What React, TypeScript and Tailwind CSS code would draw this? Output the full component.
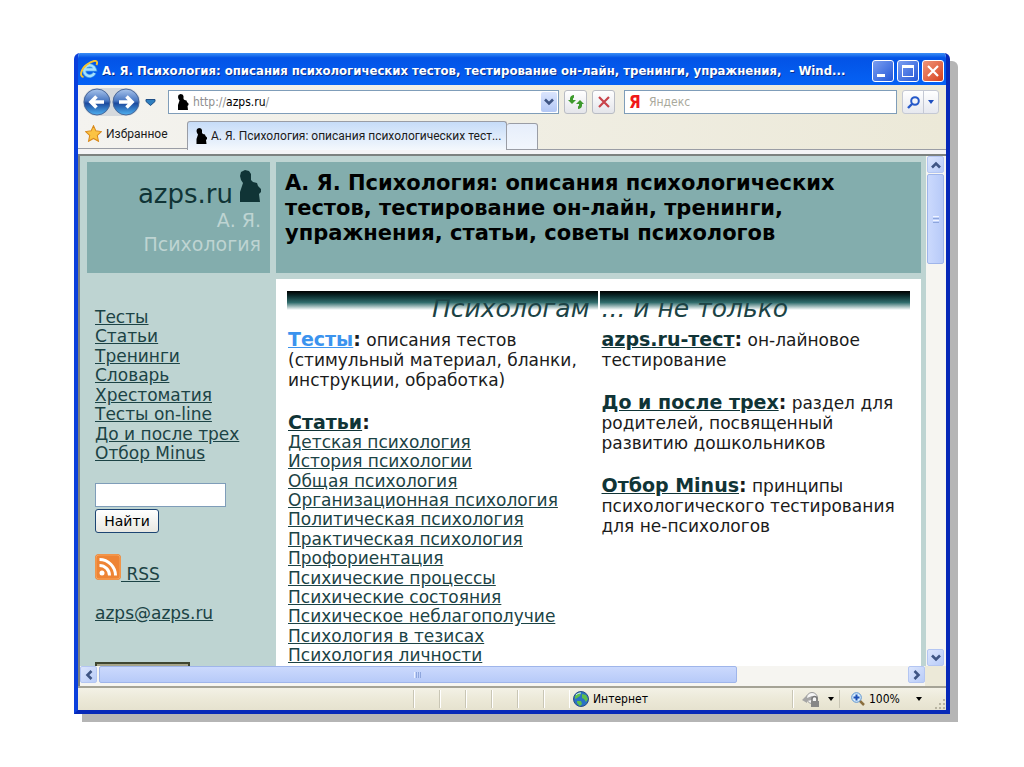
import React, { useState } from 'react';

// --- Data ---
const menuLinks = [
  'Тесты',
  'Статьи',
  'Тренинги',
  'Словарь',
  'Хрестоматия',
  'Тесты on-line',
  'До и после трех',
  'Отбор Minus',
];

const articleLinks = [
  'Детская психология',
  'История психологии',
  'Общая психология',
  'Организационная психология',
  'Политическая психология',
  'Практическая психология',
  'Профориентация',
  'Психические процессы',
  'Психические состояния',
  'Психическое неблагополучие',
  'Психология в тезисах',
  'Психология личности',
];

// --- Icons ---
function Figure({ className }: { className: string }) {
  return (
    <svg viewBox="0 0 22 32" className={className} fill="currentColor" aria-hidden="true">
      <path d="M2 2 4 1l2-1 4 1 2 3v6l2 2 4 1 1 3 3 3v3l-2 2 1 8H1V22l2-6 1-3-2-3L1 6z" />
    </svg>
  );
}

function ExplorerIcon() {
  return (
    <svg viewBox="0 0 18 18" className="size-[18px] shrink-0" fill="none" aria-hidden="true">
      <path d="M14.500 13a5.400 5.400 0 1 1 .4-3.500H5" stroke="#3f9ae6" strokeWidth="4" />
      <path d="M14.500 13a5.400 5.400 0 1 1 .4-3.500H5" stroke="#a5e0ff" strokeWidth="2.400" />
      <path d="M3.500 17C-1 16.500 1 9 7 4.500S16.500.5 17 2c.3 1 0 2-.6 3" stroke="#f7c52f" strokeWidth="1.900" />
    </svg>
  );
}

function NavArrow({ flip }: { flip?: boolean }) {
  return (
    <svg viewBox="0 0 28 28" className={flip ? 'size-7 rotate-180' : 'size-7'} aria-hidden="true">
      <defs>
        <linearGradient id={flip ? 'orbForward' : 'orbBack'} x1="0" y1={flip ? '1' : '0'} x2="0" y2={flip ? '0' : '1'}>
          <stop offset="0" stopColor="#a9c5ec" />
          <stop offset="0.450" stopColor="#4a78c2" />
          <stop offset="0.550" stopColor="#1c4a9e" />
          <stop offset="1" stopColor="#4fb2f2" />
        </linearGradient>
      </defs>
      <circle cx="14" cy="14" r="13" fill={flip ? 'url(#orbForward)' : 'url(#orbBack)'} stroke="#4a6797" />
      <path d="M13.500 8.500 8 14l5.500 5.500M9 14H21" fill="none" stroke="#fff" strokeWidth="3.600" />
    </svg>
  );
}

function Chevron({ className }: { className: string }) {
  return (
    <svg viewBox="0 0 10 8" className={className} fill="none" aria-hidden="true">
      <path d="M1 1.500 5 5.500 9 1.500" stroke="#3f5584" strokeWidth="2.600" />
    </svg>
  );
}

function Triangle({ className }: { className: string }) {
  return (
    <svg viewBox="0 0 6 4" className={className} fill="currentColor" aria-hidden="true">
      <path d="M0 0h6L3 4z" />
    </svg>
  );
}

// --- Window chrome ---
function TitleBar() {
  return (
    <header className="flex h-8 shrink-0 items-center bg-linear-to-b from-[#3a8ef5] via-[#0353e6] via-15% to-[#0562f5] pl-0.5 pr-0.5">
      <ExplorerIcon />
      <h1 className="ml-1 min-w-0 flex-1 overflow-hidden whitespace-nowrap pt-1 font-['DejaVu_Sans_Condensed','DejaVu_Sans',sans-serif] text-[13px] font-bold text-white [text-shadow:1px_1px_0_#0a2f8c]">
        А. Я. Психология: описания психологических тестов, тестирование он-лайн, тренинги, упражнения,&nbsp; - Wind...
      </h1>
      <div className="flex gap-[3px] pt-1">
        <button aria-label="Свернуть" className="flex size-[22px] items-end rounded-[3px] border border-white bg-linear-to-br from-[#7b9df0] to-[#2456d6] p-1">
          <span className="h-[3px] w-2 bg-white" />
        </button>
        <button aria-label="Развернуть" className="flex size-[22px] items-center justify-center rounded-[3px] border border-white bg-linear-to-br from-[#7b9df0] to-[#2456d6]">
          <span className="size-3 border border-t-[3px] border-white" />
        </button>
        <button aria-label="Закрыть" className="flex size-[22px] items-center justify-center rounded-[3px] border border-white bg-linear-to-br from-[#ee9479] to-[#d63d14]">
          <svg viewBox="0 0 12 12" className="size-3" aria-hidden="true">
            <path d="M1 1l10 10M11 1L1 11" stroke="#fff" strokeWidth="2.200" />
          </svg>
        </button>
      </div>
    </header>
  );
}

function AddressRow() {
  const [query, setQuery] = useState('');
  return (
    <div className="flex h-[34px] items-center pl-[5px] pr-[7px]">
      <div className="flex gap-px rounded-full bg-[#d5d9dd]">
        <button aria-label="Назад"><NavArrow /></button>
        <button aria-label="Вперед"><NavArrow flip /></button>
      </div>
      <button aria-label="Журнал" className="ml-[5px] w-[11px]">
        <svg viewBox="0 0 11 7" className="w-[11px]" aria-hidden="true">
          <path d="M1 .500h9v2L5.500 6.500 1 2.500z" fill="#2e7fc0" stroke="#1f4f86" />
        </svg>
      </button>
      <div className="ml-3 flex h-6 min-w-0 flex-1 items-center border border-[#7f9db9] bg-white pl-2 pr-px">
        <Figure className="h-4 w-3 shrink-0 text-black" />
        <div className="ml-1 flex-1 text-[12px] text-black">
          <span className="text-[#8f8f8f]">http://</span>azps.ru<span className="text-[#8f8f8f]">/</span>
        </div>
        <button aria-label="Список адресов" className="flex h-5 w-4 items-center justify-center rounded-xs bg-linear-to-b from-[#dbe5fd] to-[#b3c7f5]">
          <Chevron className="w-[10px]" />
        </button>
      </div>
      <button aria-label="Обновить" className="ml-[5px] flex h-6 w-[23px] items-center justify-center rounded-[3px] border border-[#b9bcc4] bg-linear-to-b from-white to-[#e4e5ea]">
        <svg viewBox="0 0 16 14" className="w-4" fill="#3d9a2c" aria-hidden="true">
          <path d="M6 0v2.500L5 3.500v1.500h3L4 9 0 5h2V3.500C2 1.500 4 0 6 0zM10 14v-2.500l1-1V9H8l4-4 4 4h-2v1.500c0 2-2 3.500-4 3.500z" />
        </svg>
      </button>
      <button aria-label="Остановить" className="ml-[5px] flex h-6 w-[23px] items-center justify-center rounded-[3px] border border-[#b9bcc4] bg-linear-to-b from-white to-[#e4e5ea]">
        <svg viewBox="0 0 12 12" className="w-3" aria-hidden="true">
          <path d="M1 1l10 10M11 1L1 11" stroke="#c8434a" strokeWidth="2.200" />
        </svg>
      </button>
      <div className="ml-[9px] flex h-6 w-[273px] items-center border border-[#7f9db9] bg-white pl-1">
        <span className="w-3 text-[17px] font-bold leading-5 text-[#f01818]">Я</span>
        <input
          aria-label="Поиск"
          placeholder="Яндекс"
          value={query}
          onChange={(e) => setQuery(e.target.value)}
          className="ml-2 min-w-0 flex-1 text-[12px] outline-none placeholder:text-[#a9a99c]"
        />
      </div>
      <div className="ml-[5px] flex h-6 rounded-[3px] border border-[#c5c9d4] bg-linear-to-b from-white to-[#e6e8ef]">
        <button aria-label="Найти в Яндексе" className="flex w-[21px] items-center justify-center border-r border-[#c5c9d4]">
          <svg viewBox="0 0 13 13" className="w-[13px]" fill="none" stroke="#2659c9" strokeWidth="2" aria-hidden="true">
            <circle cx="8" cy="5" r="3.800" />
            <path d="M5 8l-4 4" strokeWidth="2.400" />
          </svg>
        </button>
        <button aria-label="Параметры поиска" className="flex w-[14px] items-center justify-center text-[#1f4fc0]">
          <Triangle className="w-1.5" />
        </button>
      </div>
    </div>
  );
}

function TabRow() {
  return (
    <div className="flex h-[31px] items-end font-[Roboto,sans-serif]">
      <div className="flex h-[30px] w-[109px] items-center self-start border-b border-[#9a9da5] pl-[7px]">
        <button className="flex items-center gap-1 text-[12px] text-[#1b1b1b]">
          <svg viewBox="0 0 24 24" className="size-[17px]" aria-hidden="true">
            <path d="M12 1l3.400 7.300 7.600 1-5.600 5.500L19 23l-7-4-7 4 1.600-8.200L1 9.300l7.600-1z" fill="#fbc343" stroke="#d98a1c" strokeWidth="1.500" />
          </svg>
          Избранное
        </button>
      </div>
      <button className="flex h-[29px] w-[320px] min-w-0 items-center overflow-hidden whitespace-nowrap rounded-t-[3px] border border-b-0 border-[#9a9da5] bg-linear-to-b from-[#c6dcf8] to-[#f4f8fd] pl-2 text-[12px] text-[#1b1b1b]">
        <Figure className="h-4 w-[11px] shrink-0 text-black" />
        <span className="ml-1">А. Я. Психология: описания психологических тест...</span>
      </button>
      <button aria-label="Новая вкладка" className="h-[27px] w-[31px] self-end rounded-t-[3px] border border-l-0 border-[#9a9da5] bg-linear-to-b from-[#e6eefb] to-[#f2f6fc]" />
      <div className="flex-1 self-stretch border-b border-[#9a9da5]" />
    </div>
  );
}

const scrollButton =
  'flex size-[17px] shrink-0 items-center justify-center rounded-xs border border-[#b4c6f2] bg-linear-to-br from-[#dbe5fd] to-[#b9ccf8]';

function VerticalScrollbar() {
  return (
    <div className="flex w-5 shrink-0 flex-col bg-[#f6f5f1] px-px">
      <button aria-label="Вверх" className={scrollButton}>
        <Chevron className="w-[10px] rotate-180" />
      </button>
      <div className="flex-1 py-px">
        <div className="flex h-[19%] w-[17px] flex-col items-center justify-center gap-px rounded-xs border border-[#9fb5ea] bg-linear-to-r from-[#cbd9fd] to-[#b7caf8]">
          <span className="h-px w-1.5 bg-[#eef3ff]" />
          <span className="h-px w-1.5 bg-[#8ea6dd]" />
          <span className="h-px w-1.5 bg-[#eef3ff]" />
          <span className="h-px w-1.5 bg-[#8ea6dd]" />
        </div>
      </div>
      <button aria-label="Вниз" className={scrollButton}>
        <Chevron className="w-[10px]" />
      </button>
    </div>
  );
}

function HorizontalScrollbar() {
  return (
    <div className="flex h-5 shrink-0 items-start bg-[#f6f5f1]">
      <button aria-label="Влево" className={scrollButton}>
        <Chevron className="w-[10px] rotate-90" />
      </button>
      <div className="flex-1 px-0.5">
        <div className="flex h-[17px] w-[79%] items-center justify-center gap-px rounded-xs border border-[#9fb5ea] bg-linear-to-b from-[#cbd9fd] to-[#b7caf8]">
          <span className="h-1.5 w-px bg-[#eef3ff]" />
          <span className="h-1.5 w-px bg-[#8ea6dd]" />
          <span className="h-1.5 w-px bg-[#8ea6dd]" />
          <span className="h-1.5 w-px bg-[#8ea6dd]" />
        </div>
      </div>
      <button aria-label="Вправо" className={scrollButton}>
        <Chevron className="w-[10px] -rotate-90" />
      </button>
      <div className="w-[21px] self-stretch bg-[#ece9d8]" />
    </div>
  );
}

function StatusBar() {
  return (
    <footer className="flex h-6 shrink-0 items-center border-t-2 border-[#a5a396] bg-linear-to-b from-[#f3f1e6] via-[#ece9d8] to-[#e6e2cf] text-[12px] text-black">
      <div className="flex-1" />
      {[0, 1, 2, 3, 4, 5].map((n) => (
        <div key={n} className="h-[18px] w-[26px] border-l border-[#c9c6b5] shadow-[inset_1px_0_0_#fff]" />
      ))}
      <div className="flex h-[18px] w-[223px] items-center gap-1 border-l border-white pl-[3px]">
        <svg viewBox="0 0 16 16" className="size-4" aria-hidden="true">
          <circle cx="8" cy="8" r="7.500" fill="#2b72c4" stroke="#2a4f86" />
          <path d="M2 5c2-3 5-4 6-3l-1 3-3 2-2 1zM9 3l4 1 2 4-2 3-2-3-2-1zM4 10l4 0 1 3-2 2-3-3z" fill="#5fc04a" />
          <path d="M3 4c2-2 4-2 5-2" stroke="#cfe9ff" fill="none" />
        </svg>
        <span>Интернет</span>
      </div>
      <button aria-label="Защищенный режим" className="flex h-[18px] w-[47px] items-center gap-2 border-l border-[#c9c6b5] pl-[9px] shadow-[inset_1px_0_0_#fff]">
        <svg viewBox="0 0 18 16" className="w-[18px]" aria-hidden="true">
          <circle cx="10" cy="7" r="5.500" fill="#f5f5f5" stroke="#9b9b9b" />
          <path d="M0 9l5-5v3l5-2v4l-5 1v2z" fill="#a5a5a5" />
          <path d="M10 10V8a2 2 0 0 1 5 0v2" stroke="#777" strokeWidth="1.500" fill="none" />
          <path d="M9 10h8v6H9z" fill="#878787" />
        </svg>
        <Triangle className="w-1.5" />
      </button>
      <button className="flex h-[18px] w-[95px] items-center gap-1 border-l border-[#c9c6b5] pl-[11px]">
        <svg viewBox="0 0 14 14" className="w-[14px] shrink-0" fill="none" aria-hidden="true">
          <path d="M8 8l5 5" stroke="#8a6f3f" strokeWidth="2.500" />
          <circle cx="5.500" cy="5.500" r="4.800" fill="#d7ecfd" stroke="#5a92cf" />
          <path d="M5.500 2.500v6M2.500 5.500h6" stroke="#1c4fb5" strokeWidth="2" />
        </svg>
        <span>100%</span>
        <Triangle className="ml-3 w-1.5" />
      </button>
      <svg viewBox="0 0 12 12" className="size-3 shrink-0 self-end" fill="#b8b4a2" aria-hidden="true">
        <path d="M9 1h2v2H9zM5 5h2v2H5zM9 5h2v2H9zM1 9h2v2H1zM5 9h2v2H5zM9 9h2v2H9z" />
      </svg>
    </footer>
  );
}

// --- Web page ---
function Sidebar() {
  const [search, setSearch] = useState('');
  return (
    <aside className="w-[183px] shrink-0">
      <div className="h-[111px] bg-[#83adad] pr-[9px] pt-2 text-right">
        <div className="flex items-end justify-end gap-1.5 text-[#103436]">
          <span className="text-[26px] leading-8">azps.ru</span>
          <Figure className="mb-2 h-8 w-[22px]" />
        </div>
        <div className="-mt-0.5 text-[19px] leading-6 text-[#bed4d2]">
          А. Я.
          <br />
          Психология
        </div>
      </div>
      <div className="pl-2 pt-[35px] text-[17px] text-[#1c4345]">
        <nav className="flex h-[155px] flex-col items-start justify-between">
          {menuLinks.map((label) => (
            <a key={label} href="#" className="leading-[19px] underline">
              {label}
            </a>
          ))}
        </nav>
        <form className="mt-5" onSubmit={(e) => e.preventDefault()}>
          <input
            aria-label="Поиск по сайту"
            value={search}
            onChange={(e) => setSearch(e.target.value)}
            className="block h-6 w-[131px] border border-[#7f9db9] bg-white px-1 text-[14px] outline-none"
          />
          <button className="mt-0.5 block h-6 w-16 rounded-[3px] border border-[#1d4573] bg-linear-to-b from-white to-[#e9e8e2] text-[14px] leading-5 text-black">
            Найти
          </button>
        </form>
        <a href="#" className="mt-[21px] flex items-end">
          <svg viewBox="0 0 26 26" className="size-[26px]" fill="none" aria-hidden="true">
            <rect width="26" height="26" rx="4" fill="#ee8435" />
            <rect x="1" y="1" width="24" height="24" rx="3" stroke="#f6a45c" />
            <circle cx="7" cy="19" r="2.500" fill="#fff" />
            <path d="M4.500 11.500a10 10 0 0 1 10 10M4.500 5.500a16 16 0 0 1 16 16" stroke="#fff" strokeWidth="3" />
          </svg>
          <span className="-mb-1 whitespace-pre leading-5 underline"> RSS</span>
        </a>
        <a href="#" className="mt-[23px] block leading-5 underline">
          azps@azps.ru
        </a>
        <div className="mt-[39px] h-8 w-[95px] border-2 border-[#3f4630] bg-[#a6a58a]" />
      </div>
    </aside>
  );
}

function TopicTitle({ children, active }: { children: React.ReactNode; active?: boolean }) {
  return (
    <b className="text-[19px] leading-none">
      <a href="#" className={active ? 'text-[#3b93ee] underline' : 'text-[#103436] underline'}>
        {children}
      </a>
      :
    </b>
  );
}

function Content() {
  return (
    <main className="min-w-0 flex-1">
      <h2 className="h-[111px] bg-[#83adad] px-[9px] pt-[9px] text-[21px] font-bold leading-[25px] text-black">
        А. Я. Психология: описания психологических
        <br />
        тестов, тестирование он-лайн, тренинги,
        <br />
        упражнения, статьи, советы психологов
      </h2>
      <div className="mt-1.5 flex gap-0.5 bg-white px-[11px] pb-8 pt-3">
        <section className="flex-1">
          <h3 className="h-[39px] bg-[linear-gradient(#000,#0b2a2b_25%,#2f6b6b_60%,#fff)] bg-[length:100%_19px] bg-no-repeat pr-2 pt-0.5 text-right text-[25px] italic leading-8 text-[#1c4345]">
            Психологам
          </h3>
          <div className="pl-px text-[17px] leading-5 text-[#1b1b1b]">
            <p>
              <TopicTitle active>Тесты</TopicTitle> описания тестов
              <br />
              (стимульный материал, бланки,
              <br />
              инструкции, обработка)
            </p>
            <p className="mt-[23px]">
              <TopicTitle>Статьи</TopicTitle>
            </p>
            <ul className="flex h-[232px] flex-col justify-between text-[17px] text-[#1c4345]">
              {articleLinks.map((label) => (
                <li key={label} className="leading-[19px]">
                  <a href="#" className="underline">
                    {label}
                  </a>
                </li>
              ))}
            </ul>
          </div>
        </section>
        <section className="flex-1">
          <h3 className="h-[39px] bg-[linear-gradient(#000,#0b2a2b_25%,#2f6b6b_60%,#fff)] bg-[length:100%_19px] bg-no-repeat pl-0.5 pt-0.5 text-[25px] italic leading-8 text-[#1c4345]">
            ... и не только
          </h3>
          <div className="flex flex-col gap-[23px] pl-0.5 text-[17px] leading-5 text-[#1b1b1b]">
            <p>
              <TopicTitle>azps.ru-тест</TopicTitle> он-лайновое
              <br />
              тестирование
            </p>
            <p>
              <TopicTitle>До и после трех</TopicTitle> раздел для
              <br />
              родителей, посвященный
              <br />
              развитию дошкольников
            </p>
            <p>
              <TopicTitle>Отбор Minus</TopicTitle> принципы
              <br />
              психологического тестирования
              <br />
              для не-психологов
            </p>
          </div>
        </section>
      </div>
    </main>
  );
}

export default function App() {
  return (
    <div className="flex h-screen flex-col bg-white px-[74px] py-[53px] font-['DejaVu_Sans',sans-serif]">
      <div className="flex min-h-0 flex-1 flex-col overflow-hidden rounded-t-md border-4 border-t-0 border-[#0a3fdc] border-b-[#0628b8] border-r-[#0628b8] shadow-[8px_8px_0_#b5b5b5]">
        <TitleBar />
        <div className="shrink-0 bg-linear-to-r from-[#f4f3ef] to-[#ece9d8] font-['DejaVu_Sans_Condensed','DejaVu_Sans',sans-serif]">
          <AddressRow />
          <TabRow />
          <div className="h-1 bg-[#f4f4f6]" />
        </div>
        <div className="flex min-h-0 flex-1 flex-col border-l-2 border-t-2 border-[#7d8280]">
          <div className="flex min-h-0 flex-1">
            <div className="flex min-w-0 flex-1 gap-1.5 overflow-hidden bg-[#bed4d2] pl-[7px] pr-[5px] pt-1.5">
              <Sidebar />
              <Content />
            </div>
            <VerticalScrollbar />
          </div>
          <HorizontalScrollbar />
        </div>
        <div className="font-['DejaVu_Sans_Condensed','DejaVu_Sans',sans-serif]">
          <StatusBar />
        </div>
      </div>
    </div>
  );
}
